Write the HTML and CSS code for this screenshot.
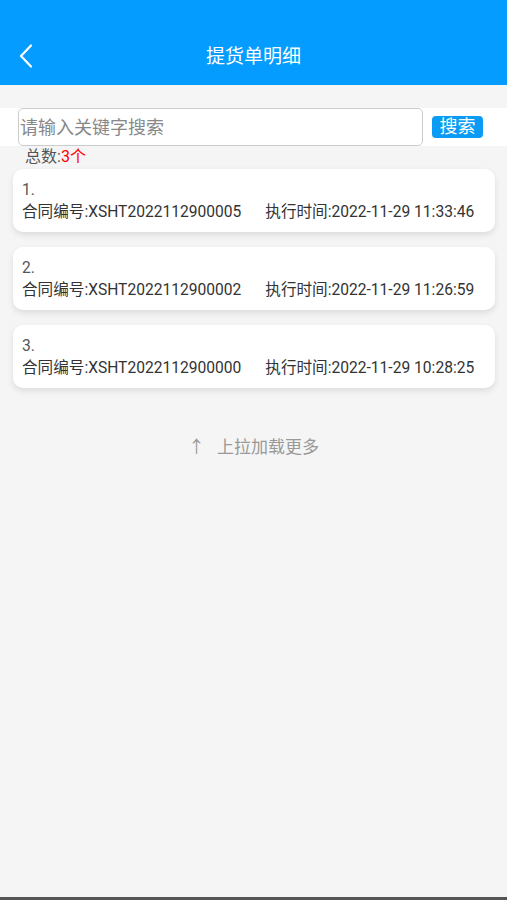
FILE: index.html
```html
<!DOCTYPE html>
<html lang="zh-CN">

<head>
    <meta charset="UTF-8">
    <meta name="viewport" content="width=device-width, initial-scale=1.0">
    <title>提货单明细</title>
    <link rel="stylesheet" href="styles.css">
</head>

<body>
    <div class="page">
        <div class="nav-bar">
            <span class="nav-back">
                <svg width="14" height="24" viewBox="0 0 14 24">
                    <path d="M12 1.5 L2 12 L12 22.5" fill="none" stroke="#fff" stroke-width="2.2" stroke-linecap="round" stroke-linejoin="round" />
                </svg>
            </span>
            <h1 class="nav-title">提货单明细</h1>
        </div>

        <div class="search-bar">
            <input type="text" class="search-input" placeholder="请输入关键字搜索">
            <button class="search-btn">搜索</button>
        </div>

        <div class="total">总数:<span class="total-num">3个</span></div>

        <div class="list">
            <div class="card">
                <div class="card-index">1.</div>
                <div class="card-row">
                    <span class="card-code">合同编号:XSHT2022112900005</span>
                    <span class="card-time">执行时间:2022-11-29 11:33:46</span>
                </div>
            </div>
            <div class="card">
                <div class="card-index">2.</div>
                <div class="card-row">
                    <span class="card-code">合同编号:XSHT2022112900002</span>
                    <span class="card-time">执行时间:2022-11-29 11:26:59</span>
                </div>
            </div>
            <div class="card">
                <div class="card-index">3.</div>
                <div class="card-row">
                    <span class="card-code">合同编号:XSHT2022112900000</span>
                    <span class="card-time">执行时间:2022-11-29 10:28:25</span>
                </div>
            </div>
        </div>

        <div class="load-more"><span class="load-arrow">↑</span>上拉加载更多</div>
    </div>
    <div class="bottom-line"></div>
</body>

</html>
```

FILE: styles.css
```css
body {
    margin: 0;
    background-color: #f5f5f5;
    font-family: Roboto, "Noto Sans CJK SC", sans-serif;
    color: #333;
    height: 900px;
    display: flex;
    flex-direction: column;
}

.page {
    flex: 1;
}

.nav-bar {
    height: 85px;
    background-color: #049cff;
    display: flex;
    align-items: flex-end;
    justify-content: center;
    position: relative;
}

.nav-title {
    margin: 0 0 13px;
    font-size: 19px;
    font-weight: normal;
    color: #fff;
    line-height: 30px;
}

.nav-back {
    position: absolute;
    left: 19px;
    bottom: 17px;
    display: flex;
}

.search-bar {
    margin-top: 23px;
    height: 38px;
    background-color: #fff;
    display: flex;
    align-items: center;
    padding-left: 18px;
}

.search-input {
    box-sizing: border-box;
    width: 405px;
    height: 38px;
    border: 1px solid #ccc;
    border-radius: 5px;
    padding: 0 0 0 1px;
    font-family: inherit;
    font-size: 18px;
    color: #333;
    outline: none;
}

.search-input::placeholder {
    color: #888;
}

.search-btn {
    margin-left: 9px;
    width: 51px;
    height: 22px;
    padding: 0;
    border: none;
    border-radius: 4px;
    background-color: #0a9bf5;
    color: #fff;
    font-family: inherit;
    font-size: 18px;
    line-height: 22px;
}

.total {
    padding-left: 25px;
    font-size: 16px;
    line-height: 22px;
    color: #555;
}

.total-num {
    color: #f00;
}

.list {
    padding: 1px 12px 0 13px;
    display: flex;
    flex-direction: column;
    gap: 15px;
}

.card {
    background-color: #fff;
    border-radius: 10px;
    box-shadow: 0 3px 6px rgba(0, 0, 0, 0.1);
    padding: 10px 9px 9px;
    height: 63px;
    box-sizing: border-box;
}

.card-index {
    font-size: 15.6px;
    line-height: 22px;
    color: #555;
}

.card-row {
    display: flex;
    gap: 24px;
    font-size: 15.6px;
    line-height: 22px;
    color: #333;
}

.load-more {
    margin-top: 47px;
    text-align: center;
    font-size: 17px;
    color: #999;
    line-height: 24px;
}

.load-arrow {
    margin-right: 12px;
}

.bottom-line {
    height: 3px;
    background-color: #555;
}
```
